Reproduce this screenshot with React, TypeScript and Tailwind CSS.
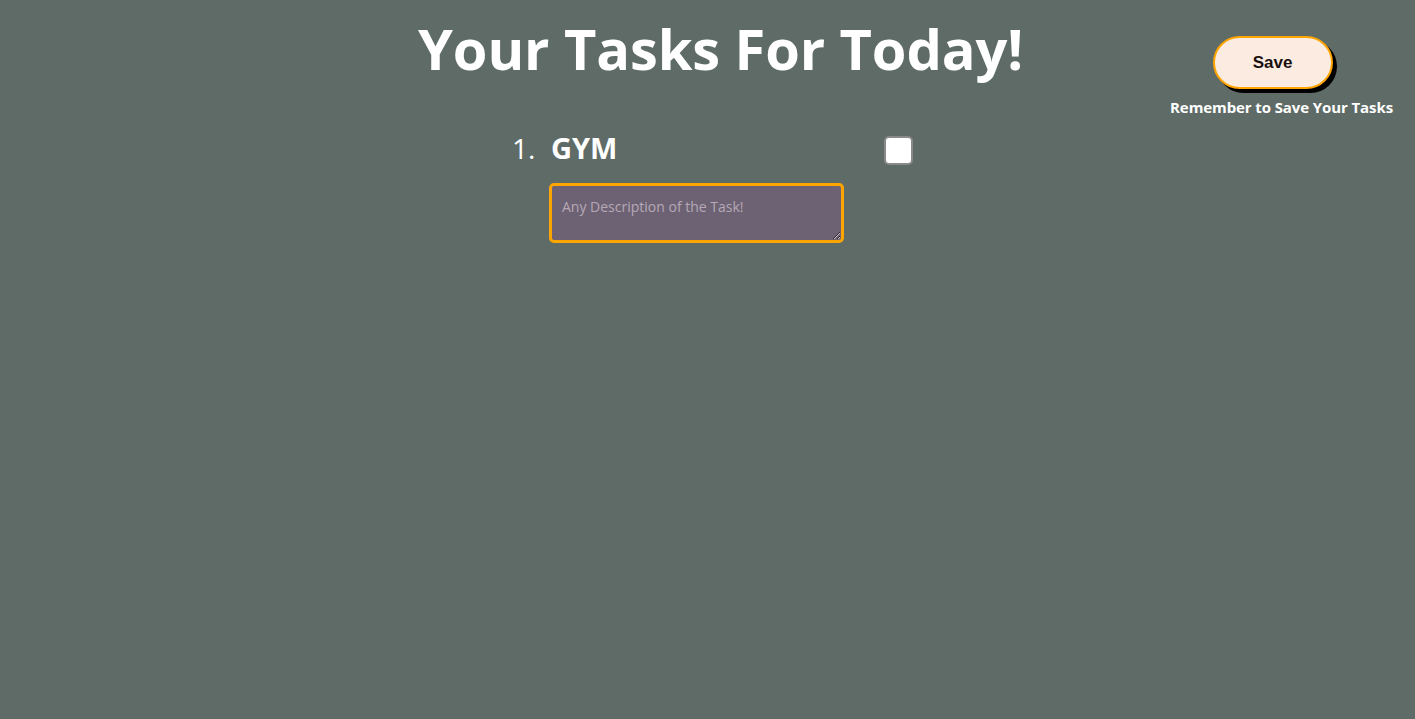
import React from "react";

export default function App() {
  return (
    <div
      className="min-h-[719px] w-full bg-[#5f6b66] text-white"
      style={{ fontFamily: '"Open Sans", "Noto Sans", sans-serif' }}
    >
      <div className="flex items-start">
        <h1 className="ml-[418px] mt-[14px] text-[56px] font-bold leading-[68px] tracking-[-0.1px] whitespace-nowrap">
          Your Tasks For Today!
        </h1>
        <div className="ml-auto mr-[22px] mt-[36px] flex flex-col items-center">
          <button
            className="ml-[-18px] h-[53px] w-[120px] rounded-full border-2 border-[#ffa500] bg-[#fbebe0] text-[17px] font-bold text-[#1a0f0f] shadow-[4px_4px_0_#000]"
            style={{ fontFamily: '"Liberation Sans", Arial, sans-serif' }}
          >
            Save
          </button>
          <p className="mt-[9px] text-[15px] font-bold leading-[18px] tracking-[-0.1px] whitespace-nowrap">
            Remember to Save Your Tasks
          </p>
        </div>
      </div>

      <ol className="mt-[12px] ml-[512px]">
        <li className="flex flex-col">
          <div className="flex items-center">
            <span className="w-[39px] text-[28px] leading-[40px]">1.</span>
            <span className="w-[333px] text-[29px] font-bold leading-[40px]">GYM</span>
            <input
              type="checkbox"
              className="mt-[5px] h-[29px] w-[29px] appearance-none rounded-[5px] border-2 border-[#8a8a8a] bg-white"
            />
          </div>
          <textarea
            placeholder="Any Description of the Task!"
            className="ml-[37px] mt-[15px] h-[60px] w-[295px] rounded-[5px] border-[3px] border-[#ffa500] bg-[#6d6273] px-[10px] pt-[12px] pb-[8px] text-[14px] leading-[18px] text-white outline-none placeholder:text-[#b6a8b6]"
          />
        </li>
      </ol>
    </div>
  );
}
